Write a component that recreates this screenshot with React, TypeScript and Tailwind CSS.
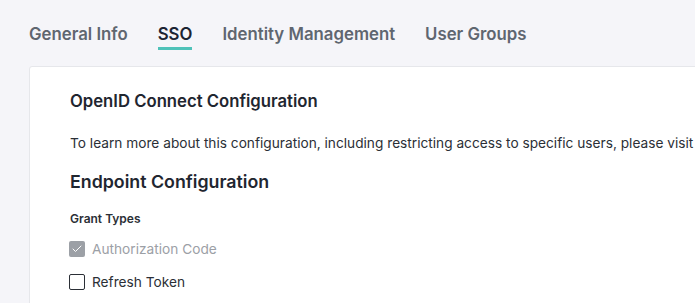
import { Check } from 'lucide-react'

const tabs = ['General Info', 'SSO', 'Identity Management', 'User Groups']

type CheckRowProps = {
  label: string
  checked?: boolean
  disabled?: boolean
}

function CheckRow({ label, checked, disabled }: CheckRowProps) {
  return (
    <label className="-ml-px flex h-6 items-center gap-[7px]">
      {checked ? (
        <span className="flex h-4 w-4 items-center justify-center rounded-[2px] bg-[#9ca0a6]">
          <Check className="h-3 w-3 text-white" strokeWidth={2} />
        </span>
      ) : (
        <span className="h-4 w-4 rounded-[2px] border border-[#2b2f36] bg-white" />
      )}
      <span className={`text-[13.7px] ${disabled ? 'text-[#9ca0a6]' : 'text-[#2b2f36]'}`}>{label}</span>
    </label>
  )
}

export default function App() {
  return (
    <div className="h-[303px] w-[695px] overflow-hidden bg-[#f5f5f9] pl-[29px] pt-[22px] font-['Inter',sans-serif]">
      <nav className="flex gap-[30px]" aria-label="Settings tabs">
        {tabs.map((tab) => {
          const active = tab === 'SSO'
          return (
            <div key={tab} className="flex flex-col">
              <span
                className={`text-[16.8px] font-semibold leading-6 ${
                  active ? 'text-[#1c2433]' : 'text-[#5f6670]'
                }`}
              >
                {tab}
              </span>
              <span className={`mt-px h-[3px] ${active ? 'bg-[#4fc2b9]' : 'bg-transparent'}`} />
            </div>
          )
        })}
      </nav>

      <section className="mt-[16px] h-[400px] w-[800px] rounded-tl-[3px] border border-[#e6e7eb] bg-white pl-10 pt-[22px]">
        <h2 className="text-[16.7px] font-semibold leading-6 text-[#1f2630]">OpenID Connect Configuration</h2>
        <p className="mt-5 whitespace-nowrap text-[13.7px] leading-5 text-[#2b2f36]">
          To learn more about this configuration, including restricting access to specific users, please visit
        </p>
        <h3 className="mt-[15px] text-[17.8px] font-semibold leading-7 text-[#1f2630]">Endpoint Configuration</h3>
        <h4 className="mt-[15px] text-xs font-semibold leading-4 text-[#2b2f36]">Grant Types</h4>
        <div className="mt-[10px] flex flex-col gap-[9px]">
          <CheckRow label="Authorization Code" checked disabled />
          <CheckRow label="Refresh Token" />
        </div>
      </section>
    </div>
  )
}
